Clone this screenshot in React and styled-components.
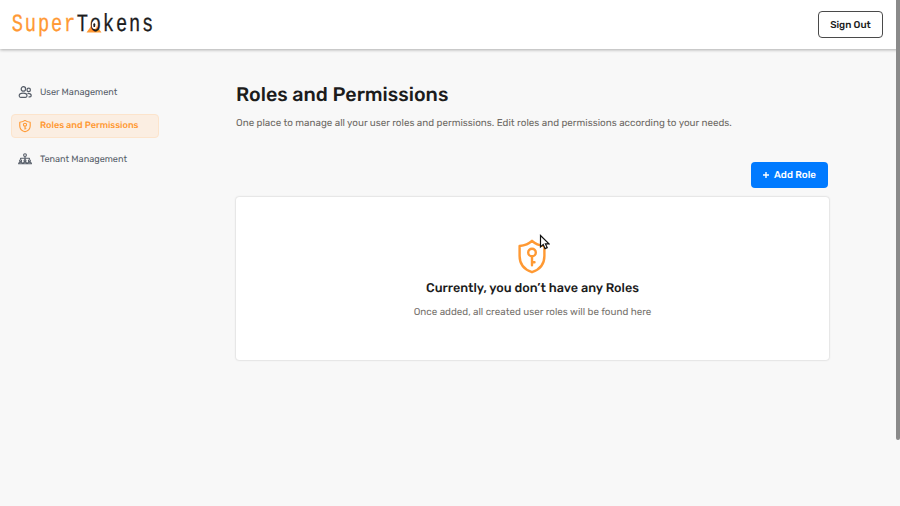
import React from "react";
import styled, { createGlobalStyle, css } from "styled-components";

const GlobalStyle = createGlobalStyle`
  * { box-sizing: border-box; }
  html, body { margin: 0; height: 100%; overflow: hidden; }
  body {
    background: #f8f8f8;
    font-family: Rubik, Roboto, "Liberation Sans", sans-serif;
    color: #1c1c1c;
    text-rendering: geometricPrecision;
  }
  button { text-rendering: geometricPrecision; }
`;

const Page = styled.div`
  height: 506px;
  display: flex;
  flex-direction: column;
  background: #f8f8f8;
  position: relative;
`;

const Header = styled.header`
  height: 49px;
  flex: none;
  display: flex;
  align-items: center;
  justify-content: space-between;
  padding: 0 17px 0 12px;
  background: #fff;
  box-shadow: 0 1px 3px rgba(0, 0, 0, 0.3);
`;

const LogoSvg = styled.svg`
  display: block;
  width: 142px;
  height: 30px;
  margin-top: -2px;
  font-family: "Liberation Mono", monospace;
  font-size: 24px;
`;

const SignOut = styled.button`
  width: 65px;
  height: 27px;
  padding: 1px 0 0;
  background: #fff;
  border: 1px solid #4a4a4a;
  border-radius: 4px;
  color: #1c1c1c;
  font: 500 9.9px/25px Rubik, Roboto, sans-serif;
  white-space: nowrap;
`;

const Body = styled.div`
  display: flex;
  flex: 1;
`;

const Sidebar = styled.nav`
  width: 236px;
  flex: none;
  padding: 31px 0 0 11px;
  display: flex;
  flex-direction: column;
  gap: 9.7px;
`;

const NavItem = styled.a`
  display: flex;
  align-items: center;
  gap: 8px;
  width: 148px;
  height: 24px;
  padding-left: 6px;
  border: 1px solid transparent;
  border-radius: 4px;
  color: #565d68;
  font-size: 9.15px;
  white-space: nowrap;
  ${(p) =>
    p.$active &&
    css`
      color: #ff9933;
      background: #fbeee2;
      border-color: #fce4cc;
      font-weight: 500;
    `}
`;

const NavIcon = styled.svg`
  width: 14px;
  height: 14px;
  flex: none;
  margin-left: -0.5px;
  margin-right: 0.5px;
  fill: none;
  stroke: currentColor;
  stroke-linecap: round;
  stroke-linejoin: round;
`;

const Main = styled.main`
  width: 593px;
  padding-top: 33px;
  display: flex;
  flex-direction: column;
`;

const Title = styled.h1`
  margin: 0;
  padding-top: 1px;
  font-size: 19.7px;
  font-weight: 500;
  line-height: 23px;
`;

const Intro = styled.p`
  margin: 10px 0 0;
  font-size: 9.85px;
  line-height: 16px;
  color: #6e6a65;
  white-space: nowrap;
`;

const AddButton = styled.button`
  align-self: flex-end;
  display: flex;
  align-items: center;
  justify-content: center;
  gap: 5px;
  width: 77px;
  height: 26px;
  margin: 30px 1px 0 0;
  padding: 1px 0 0;
  border: 0;
  border-radius: 4px;
  background: #007aff;
  color: #fff;
  font: 500 9.9px/25px Rubik, Roboto, sans-serif;
  white-space: nowrap;
`;

const PlusSvg = styled.svg`
  width: 6px;
  height: 6px;
  margin-top: -1px;
  stroke: #fff;
  stroke-width: 1.4;
`;

const EmptyCard = styled.section`
  height: 163px;
  margin-top: 9px;
  padding-top: 42px;
  display: flex;
  flex-direction: column;
  align-items: center;
  background: #fff;
  border-radius: 3px;
  box-shadow: 0 0 2px rgba(0, 0, 0, 0.25);
`;

const ShieldSvg = styled.svg`
  width: 28px;
  height: 35px;
  margin-left: -1px;
  fill: none;
  stroke: #ff9933;
  stroke-linecap: round;
  stroke-linejoin: round;
`;

const EmptyTitle = styled.h2`
  margin: 7px 0 0;
  font-size: 12.65px;
  line-height: 16px;
  font-weight: 500;
`;

const EmptyText = styled.p`
  margin: 8px 0 0;
  font-size: 9.85px;
  line-height: 15px;
  color: #77736e;
`;

const ScrollThumb = styled.div`
  position: absolute;
  top: 0;
  right: 0;
  width: 4px;
  height: 440px;
  border-radius: 0 0 2px 2px;
  background: #8a8a8a;
`;

const PointerSvg = styled.svg`
  position: absolute;
  left: 539px;
  top: 234px;
  width: 11px;
  height: 16px;
`;

const Logo = () => (
  <LogoSvg viewBox="0 0 142 30" role="img" aria-label="SuperTokens">
    <path d="M82 13 L89.5 23.5 H74.5 Z" fill="#ff9933" />
    <g transform="translate(-.2 22.4) scale(.78 1.03)" strokeWidth=".3">
      <text fill="#ff9933" stroke="#ff9933" letterSpacing="2.35">Super</text>
      <text x="83.2" fill="#1c1c1c" stroke="#1c1c1c" letterSpacing="2.35">Tokens</text>
    </g>
    <ellipse cx="82.3" cy="16" rx="2.5" ry="4.1" fill="#fff" />
    <path d="M82.3 15.2v2" stroke="#1c1c1c" strokeWidth="1.8" strokeLinecap="round" />
  </LogoSvg>
);

const UsersIcon = () => (
  <NavIcon viewBox="0 0 14 14" strokeWidth="1.2">
    <circle cx="5.4" cy="3.9" r="2.2" />
    <circle cx="10.7" cy="4.9" r="1.7" />
    <path d="M1.2 10.8Q1.2 8.1 5.1 8.1T9 10.8Q9 12.3 7.6 12.3H2.6Q1.2 12.3 1.2 10.8Z" />
    <path d="M10 8.4Q13.2 8.4 13.2 10.6Q13.2 11.9 12 11.9H11" />
  </NavIcon>
);

const RolesIcon = () => (
  <NavIcon viewBox="0 0 28 35" preserveAspectRatio="none" strokeWidth="2.6">
    <g transform="translate(2.2 2) scale(.84 .9)"><ShieldPaths /></g>
  </NavIcon>
);

const TenantIcon = () => (
  <NavIcon viewBox="0 0 14 14" strokeWidth="1.1">
    <circle cx="7" cy="3.1" r="1.4" />
    <path d="M7 5V8.2M2.6 7V6.3H11.4V7" />
    <circle cx="2.6" cy="8.7" r="1" />
    <circle cx="7" cy="8.7" r="1" />
    <circle cx="11.4" cy="8.7" r="1" />
    <path d="M.6 11.7Q.6 10.3 2.6 10.3T4.7 11.7ZM5 11.7Q5 10.3 7 10.3T9 11.7ZM9.3 11.7Q9.3 10.3 11.4 10.3T13.4 11.7Z" />
  </NavIcon>
);

const ShieldPaths = () => (
  <>
    <path d="M14 1.8C10.7 5 6.5 6.5 1.6 7V17C1.6 25 6 30.5 14 33.2C22 30.5 26.4 25 26.4 17V7C21.5 6.5 17.3 5 14 1.8Z" />
    <circle cx="14" cy="13.5" r="3.8" />
    <path d="M14 17.3V26.3M14 23.3H16.5" />
  </>
);

const navItems = [
  { label: "User Management", Icon: UsersIcon },
  { label: "Roles and Permissions", Icon: RolesIcon, active: true },
  { label: "Tenant Management", Icon: TenantIcon },
];

export default function App() {
  return (
    <>
      <GlobalStyle />
      <Page>
        <Header>
          <Logo />
          <SignOut>Sign Out</SignOut>
        </Header>
        <Body>
          <Sidebar>
            {navItems.map(({ label, Icon, active }) => (
              <NavItem key={label} $active={active}>
                <Icon />
                <span>{label}</span>
              </NavItem>
            ))}
          </Sidebar>
          <Main>
            <Title>Roles and Permissions</Title>
            <Intro>
              One place to manage all your user roles and permissions. Edit roles and permissions according to your needs.
            </Intro>
            <AddButton>
              <PlusSvg viewBox="0 0 6 6"><path d="M3 0V6M0 3H6" /></PlusSvg>
              Add Role
            </AddButton>
            <EmptyCard>
              <ShieldSvg viewBox="0 0 28 35" strokeWidth="2.4"><ShieldPaths /></ShieldSvg>
              <EmptyTitle>Currently, you don’t have any Roles</EmptyTitle>
              <EmptyText>Once added, all created user roles will be found here</EmptyText>
            </EmptyCard>
          </Main>
        </Body>
        <ScrollThumb />
        <PointerSvg viewBox="0 0 11 16">
          <path d="M1.5 1.5V13L4.2 10.6L6 14.6L8.2 13.6L6.4 9.8H10Z" fill="#fff" stroke="#111" strokeWidth="1.2" />
        </PointerSvg>
      </Page>
    </>
  );
}
